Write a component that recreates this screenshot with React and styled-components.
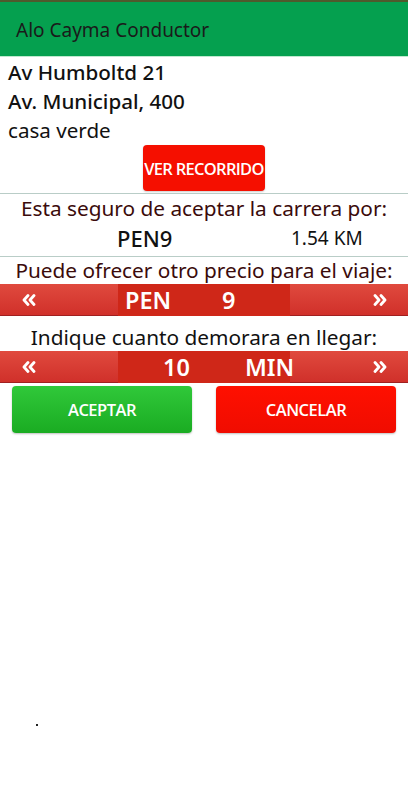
import React from "react";
import styled, { createGlobalStyle } from "styled-components";

const Global = createGlobalStyle`
  html, body { margin: 0; padding: 0; background: #ffffff; }
  body { font-family: "Noto Sans", "Open Sans", sans-serif; width: 408px; height: 800px; overflow: hidden; }
  * { box-sizing: border-box; }
`;

const Page = styled.div`
  width: 408px;
  height: 800px;
  display: flex;
  flex-direction: column;
  background: #fff;
  position: relative;
`;

const Header = styled.header`
  height: 57px;
  flex: none;
  background: #05a04f;
  border-top: 2px solid #4f5a2c;
  border-bottom: 1px solid #bfe9cf;
  display: flex;
  align-items: center;
  padding-left: 16px;
  padding-top: 2px;
  font-size: 19px;
  color: #1a1a1a;
`;

const Addresses = styled.div`
  display: flex;
  flex-direction: column;
  padding: 1px 8px 0;
`;

const AddrLine = styled.div`
  font-size: 20.6px;
  line-height: 29px;
  color: #111;
  font-weight: ${(p) => (p.$bold ? 500 : 400)};
`;

const CenterRow = styled.div`
  display: flex;
  justify-content: center;
  padding-top: 0;
  padding-bottom: 2px;
`;

const RedButton = styled.button`
  width: 122px;
  height: 46px;
  border: none;
  border-radius: 4px;
  background: #f50f00;
  color: #fff;
  font-family: "Open Sans", sans-serif;
  font-weight: 600;
  font-size: 16.5px;
  letter-spacing: -0.7px;
  padding: 0;
  white-space: nowrap;
  overflow: visible;
  box-shadow: 0 1px 2px rgba(0,0,0,0.2);
`;

const Divider = styled.div`
  height: 1px;
  flex: none;
  background: #b9cdc7;
`;

const Question = styled.div`
  text-align: center;
  font-size: 20.8px;
  line-height: ${(p) => p.$lh || 28}px;
  margin-top: ${(p) => p.$mt || 0}px;
  white-space: nowrap;
  color: ${(p) => p.$color || "#3b0b0b"};
`;

const PriceRow = styled.div`
  display: flex;
  align-items: center;
  height: 34px;
  padding-bottom: 3px;
  padding-left: 117px;
`;

const Price = styled.div`
  font-size: 22px;
  font-weight: 500;
  color: #111;
  width: 174px;
`;

const Km = styled.div`
  font-size: 19px;
  color: #111;
`;

const Spinner = styled.div`
  height: 32px;
  flex: none;
  display: grid;
  grid-template-columns: 118px 172px 118px;
  background: linear-gradient(#e04a3e, #d0302a);
  border-bottom: 1px solid #a02020;
  color: #fff;
  font-weight: 600;
`;

const Side = styled.div`
  display: flex;
  align-items: center;
  justify-content: ${(p) => (p.$right ? "flex-end" : "flex-start")};
  padding: ${(p) => (p.$right ? "0 21px 0 0" : "0 0 0 22px")};
`;

const Center = styled.div`
  background: #cf2718;
  display: flex;
  align-items: center;
  font-size: 23.5px;
`;

const Cell = styled.span`
  width: ${(p) => p.$w}px;
  text-align: ${(p) => p.$align || "left"};
  padding-left: ${(p) => p.$pl || 0}px;
`;

const Actions = styled.div`
  display: flex;
  justify-content: space-between;
  padding: 3px 12px 0;
`;

const ActionButton = styled.button`
  width: 180px;
  height: 47px;
  border: none;
  border-radius: 4px;
  background: ${(p) => (p.$green ? "linear-gradient(#30c83a, #1aac22)" : "linear-gradient(#ff1000, #f00c00)")};
  color: #fff;
  font-family: "Open Sans", sans-serif;
  font-weight: 600;
  font-size: 16.5px;
  letter-spacing: -0.5px;
  box-shadow: 0 1px 2px rgba(0,0,0,0.25);
`;

const Dot = styled.span`
  position: absolute;
  left: 36px;
  top: 724px;
  width: 2px;
  height: 2px;
  background: #222;
`;

const Chevrons = ({ right }) => (
  <svg width="14" height="12" viewBox="0 0 14 12">
    <g fill="none" stroke="#fff" strokeWidth="2.8" strokeLinecap="round" strokeLinejoin="round" transform={right ? "translate(14 0) scale(-1 1)" : undefined}>
      <path d="M6 1.5 L2 6 L6 10.5" />
      <path d="M12 1.5 L8 6 L12 10.5" />
    </g>
  </svg>
);

export default function App() {
  return (
    <Page>
      <Global />
      <Header>Alo Cayma Conductor</Header>
      <Addresses>
        <AddrLine $bold>Av Humboltd 21</AddrLine>
        <AddrLine $bold>Av. Municipal, 400</AddrLine>
        <AddrLine>casa verde</AddrLine>
      </Addresses>
      <CenterRow>
        <RedButton>VER RECORRIDO</RedButton>
      </CenterRow>
      <Divider />
      <Question>Esta seguro de aceptar la carrera por:</Question>
      <PriceRow>
        <Price>PEN9</Price>
        <Km>1.54 KM</Km>
      </PriceRow>
      <Divider />
      <Question $lh={27}>Puede ofrecer otro precio para el viaje:</Question>
      <Spinner>
        <Side><Chevrons /></Side>
        <Center>
          <Cell $w={104} $pl={7}>PEN</Cell>
          <Cell $w={30}>9</Cell>
        </Center>
        <Side $right><Chevrons right /></Side>
      </Spinner>
      <Question $color="#111" $mt={7}>Indique cuanto demorara en llegar:</Question>
      <Spinner>
        <Side><Chevrons /></Side>
        <Center>
          <Cell $w={72} $align="right">10</Cell>
          <Cell $w={100} $pl={55}>MIN</Cell>
        </Center>
        <Side $right><Chevrons right /></Side>
      </Spinner>
      <Actions>
        <ActionButton $green>ACEPTAR</ActionButton>
        <ActionButton>CANCELAR</ActionButton>
      </Actions>
      <Dot />
    </Page>
  );
}
